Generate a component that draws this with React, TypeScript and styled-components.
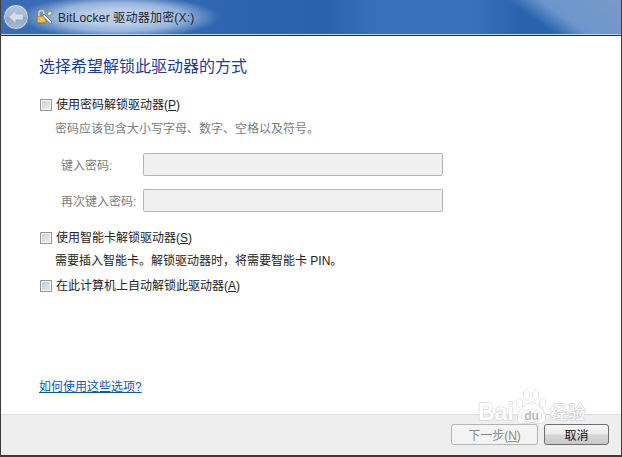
import styled, { createGlobalStyle } from 'styled-components';

const GlobalStyle = createGlobalStyle`
  html, body {
    margin: 0;
    padding: 0;
    background: #fff;
  }
`;

const Window = styled.div`
  position: relative;
  box-sizing: border-box;
  width: 622px;
  height: 457px;
  display: flex;
  flex-direction: column;
  overflow: hidden;
  background: #fff;
  border-left: 1px solid #3c3c3c;
  border-right: 1px solid #3c3c3c;
  border-bottom: 2px solid #3c3c3c;
  font-family: "Liberation Sans", "Noto Sans CJK SC", sans-serif;
  font-size: 12px;
  color: #1c1c1c;
`;

const TitleBar = styled.div`
  box-sizing: border-box;
  flex: none;
  height: 36px;
  display: flex;
  align-items: center;
  padding: 0 0 2px 2px;
  border-bottom: 1px solid #20304a;
  box-shadow: inset 0 -1px 0 #bcd0ea;
  background:
    radial-gradient(ellipse 100px 22px at 118px 17px, rgba(190, 210, 235, 0.95) 0 35%, rgba(190, 210, 235, 0.7) 65%, rgba(190, 210, 235, 0) 100%),
    linear-gradient(36deg, rgba(122, 155, 205, 0) 83%, #6c97cc 88%, #7b9ac6 100%),
    linear-gradient(90deg, #3a6db5 0%, #2b62ae 52%, #3a72bd 62%, #3a71bc 76%, #2b62ae 84%);
`;

const BackButton = styled.div`
  box-sizing: border-box;
  width: 26px;
  height: 26px;
  border-radius: 50%;
  border: 1px solid #55769f;
  box-shadow: inset 0 0 0 1px rgba(225, 235, 247, 0.7);
  background: linear-gradient(#b3c4da, #a3b7d1 50%, #8fa6c5 52%, #a9bcd4);
  display: flex;
  align-items: center;
  justify-content: center;
  margin-right: 7px;
`;

const TitleText = styled.span`
  margin-left: 4px;
  font-size: 12px;
  color: #1d2530;
  font-family: "Liberation Sans", "Noto Sans CJK SC", sans-serif;
  letter-spacing: 0.2px;
`;

const Content = styled.main`
  flex: 1;
  display: flex;
  flex-direction: column;
  padding: 21px 0 0 38px;
`;

const Heading = styled.h1`
  margin: 0 0 18px;
  font-size: 16px;
  line-height: 20px;
  font-weight: 400;
  color: #1f3a93;
`;

const OptionRow = styled.label`
  display: flex;
  align-items: center;
  height: 16px;
  padding-left: 1px;
  gap: 4px;
  color: #222;
`;

const CheckBox = styled.span<{ $tinted?: boolean }>`
  box-sizing: border-box;
  flex: none;
  width: 12px;
  height: 12px;
  margin-top: 3px;
  border: 1px solid #979797;
  box-shadow: inset 0 0 0 1px #f6f6f6;
  background: ${p => (p.$tinted
    ? 'linear-gradient(135deg, #b4cce2, #e2ecf5)'
    : 'linear-gradient(135deg, #cdcdcd, #f0f0f0)')};
`;

const Key = styled.span`
  text-decoration: underline;
  text-underline-offset: 1px;
`;

const Note = styled.p<{ $muted?: boolean; $top: number; $gap: number }>`
  margin: ${p => p.$top}px 0 ${p => p.$gap}px 16px;
  line-height: 17px;
  font-size: 12px;
  color: ${p => (p.$muted ? '#7b7b7b' : '#222')};
`;

const Field = styled.div`
  display: grid;
  grid-template-columns: 104px 300px;
  align-items: center;
  height: 23px;
  margin-bottom: 13px;
`;

const FieldLabel = styled.span`
  padding-left: 22px;
  font-size: 12px;
  color: #7b7b7b;
`;

const FieldBox = styled.div`
  box-sizing: border-box;
  height: 23px;
  background: #f0f0f0;
  border: 1px solid #b4b4b4;
  border-radius: 2px;
`;

const SmartCardRow = styled(OptionRow)`
  margin-top: 3px;
`;

const HelpLink = styled.a`
  margin-top: auto;
  margin-bottom: 19px;
  align-self: flex-start;
  font-size: 12px;
  line-height: 16px;
  color: #0f57b0;
  text-decoration: underline;
`;

const Footer = styled.footer`
  box-sizing: border-box;
  flex: none;
  height: 41px;
  display: flex;
  justify-content: flex-end;
  align-items: flex-start;
  gap: 6px;
  padding: 9px 12px 0 0;
  background: #eeeeee;
  border-top: 1px solid #dcdcdc;
`;

const NextButton = styled.button`
  box-sizing: border-box;
  width: 87px;
  height: 21px;
  padding: 0;
  font: inherit;
  color: #8a8a8a;
  background: #f3f3f3;
  border: 1px solid #b5b5b5;
  border-radius: 3px;
`;

const CancelButton = styled.button`
  box-sizing: border-box;
  width: 65px;
  height: 21px;
  padding: 0;
  font: inherit;
  color: #111;
  background: linear-gradient(#f6f6f6 0%, #ebebeb 45%, #d6d6d6 55%, #c9c9c9 100%);
  border: 1px solid #6f6f6f;
  border-radius: 3px;
`;

const Watermark = styled.div`
  position: absolute;
  left: 477px;
  top: 388px;
  display: flex;
  align-items: flex-end;
  pointer-events: none;
  color: #fff;
  -webkit-text-stroke: 1px #cacaca;
  paint-order: stroke fill;
`;

const BrandText = styled.span`
  font-family: "Liberation Sans", sans-serif;
  font-size: 23px;
  line-height: 30px;
  font-weight: 700;
  margin-bottom: -2px;
`;

const BrandCn = styled.span`
  font-size: 18px;
  line-height: 30px;
  margin-left: 1px;
  margin-bottom: -3px;
`;

const PawIcon = () => (
  <svg width="35" height="38" viewBox="0 0 34 38" style={{ marginBottom: -1 }}>
    <g fill="#fff" stroke="#c6c6c6" strokeWidth="1">
      <ellipse cx="5" cy="15" rx="3" ry="4" />
      <ellipse cx="12" cy="7" rx="3" ry="5" />
      <ellipse cx="21" cy="7" rx="3" ry="5" />
      <ellipse cx="28" cy="15" rx="3" ry="4" />
      <path d="M17 15 C10 15 3 24 3 30 C3 36 10 36 17 34 C24 36 31 36 31 30 C31 24 24 15 17 15 Z" />
      <ellipse cx="17" cy="28" rx="10" ry="6" />
    </g>
    <text x="17" y="32" textAnchor="middle" fontSize="12" fontWeight="700" fontFamily="Liberation Sans, sans-serif" fill="#b8b8b8" stroke="none">du</text>
  </svg>
);

const BackArrow = () => (
  <svg width="18" height="18" viewBox="0 0 17 17">
    <path d="M2 8.5 L8 3 V6.2 H15 V10.8 H8 V14 Z" fill="#d3deeb" />
  </svg>
);

const KeyIcon = () => (
  <svg width="18" height="18" viewBox="0 0 18 18">
    <rect x="1" y="8" width="9" height="7" rx="1" fill="#e8bb45" stroke="#8a6a1c" strokeWidth="0.8" />
    <path d="M3 8 V5 a2.5 2.5 0 0 1 5 0 V8" fill="none" stroke="#e6d08c" strokeWidth="1.6" />
    <path d="M8 6 L16 14 L14.5 16 L6.5 8 Z" fill="#f2f2e8" stroke="#4a545e" strokeWidth="0.7" />
    <circle cx="5.5" cy="11.5" r="1.1" fill="#fff2b8" />
    <path d="M11 5 L15 3 L16 6 L12.5 8 Z" fill="#f4ecc0" stroke="#5f7c48" strokeWidth="0.6" />
  </svg>
);

const App = () => {
  return (
    <Window>
      <GlobalStyle />
      <TitleBar>
        <BackButton>
          <BackArrow />
        </BackButton>
        <KeyIcon />
        <TitleText>BitLocker 驱动器加密(X:)</TitleText>
      </TitleBar>

      <Content>
        <Heading>选择希望解锁此驱动器的方式</Heading>

        <OptionRow>
          <CheckBox />
          <span>使用密码解锁驱动器(<Key>P</Key>)</span>
        </OptionRow>
        <Note $muted $top={10} $gap={15}>密码应该包含大小写字母、数字、空格以及符号。</Note>
        <Field>
          <FieldLabel>键入密码:</FieldLabel>
          <FieldBox />
        </Field>
        <Field>
          <FieldLabel>再次键入密码:</FieldLabel>
          <FieldBox />
        </Field>

        <SmartCardRow>
          <CheckBox />
          <span>使用智能卡解锁驱动器(<Key>S</Key>)</span>
        </SmartCardRow>
        <Note $top={9} $gap={6}>需要插入智能卡。解锁驱动器时，将需要智能卡 PIN。</Note>
        <OptionRow>
          <CheckBox $tinted />
          <span>在此计算机上自动解锁此驱动器(<Key>A</Key>)</span>
        </OptionRow>

        <HelpLink href="#">如何使用这些选项?</HelpLink>
      </Content>

      <Footer>
        <NextButton disabled>下一步(<Key>N</Key>)</NextButton>
        <CancelButton>取消</CancelButton>
      </Footer>

      <Watermark>
        <BrandText>Bai</BrandText>
        <PawIcon />
        <BrandCn>经验</BrandCn>
      </Watermark>
    </Window>
  );
};

export default App;
